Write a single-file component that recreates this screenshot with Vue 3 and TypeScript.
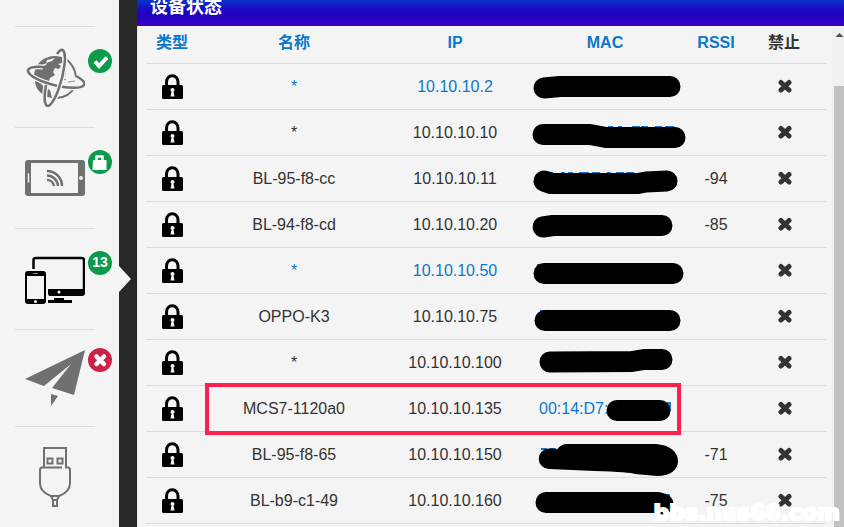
<script setup lang="ts">
interface Device {
  name: string
  ip: string
  rssi: string
  own?: boolean
  mac?: string
  marked?: boolean
  mask: string
  filled?: boolean
  traces?: string
}

const devices: Device[] = [
  { name: '*', ip: '10.10.10.2', rssi: '', own: true, mask: 'M24 24L40 22.5H150' },
  { name: '*', ip: '10.10.10.10', rssi: '', mask: 'M23 24.5H70L86 27.5H155', traces: 'M88 17h5m5 0h4m10 0h8m1 0h7m7 0h7m3 0h9' },
  { name: 'BL-95-f8-cc', ip: '10.10.10.11', rssi: '-94', mask: 'M24 25L31 27.5H118L126 26L147 25', traces: 'M27 17h6m8 0h4m3 0h5m6 0h10m3 0h8m7 0h4m5 0h8m2 0h8' },
  { name: 'BL-94-f8-cd', ip: '10.10.10.20', rssi: '-85', mask: 'M23 25L33 23.5H142' },
  { name: '*', ip: '10.10.10.50', rssi: '', own: true, mask: 'M24 25.5H153', traces: 'M17 17h4' },
  { name: 'OPPO-K3', ip: '10.10.10.75', rssi: '', mask: 'M25 26.5H150', traces: 'M20 17h4' },
  { name: '*', ip: '10.10.10.100', rssi: '', mask: 'M30 22L112 21.5L124 19.5H142' },
  { name: 'MCS7-1120a0', ip: '10.10.10.135', rssi: '', mac: '00:14:D7:', marked: true, mask: 'M97 24.5H140', traces: 'M147 17h3v8' },
  {
    name: 'BL-95-f8-65', ip: '10.10.10.150', rssi: '-71', filled: true, traces: 'M21 17h6m3 0h6',
    mask: 'M29 16.5Q34 16 37 17.500Q41 12 47 12H136C150 13 158 20 158 29C158 38 150 44 137 44L115 42Q110 40 75 39L52 38L29 37A10 10 0 0 1 29 16.500Z',
  },
  { name: 'BL-b9-c1-49', ip: '10.10.10.160', rssi: '-75', mask: 'M26 24.500H138L143 26', traces: 'M146 17h3v3' },
]
</script>

<template>
  <div class="page">
    <nav class="side" aria-label="状态">
      <div class="lead"></div>
      <a class="item" href="#internet">
        <svg class="icon" width="60" height="60" viewBox="0 0 60 60">
          <path d="M41 12Q50 19 51 30M50 40Q44 50 32 51" fill="none" stroke="#707070" stroke-width="2" />
          <path d="M9 31C9 17 18 9 31 9L37 10L37 16L33 17L36 19L34 22L30 21L28 25L30 28L25 31L24 34L10 32Z" fill="#707070" />
          <path d="M22 13l8-2-3 3-6 2zM17 18l5-2-1 2-5 2z" fill="#f4f4f4" />
          <path d="M10 34C17 35 18 41 25 43L27 51C18 50 10 42 10 34Z" fill="#707070" />
          <path d="M37 29l4-2M43 35l7-1M38 33l3-1" stroke="#909090" stroke-width="1" />
          <path d="M18 20A29 8 14 1 0 51 29" fill="none" stroke="#f4f4f4" stroke-width="5" />
          <path d="M18 20A29 8 14 1 0 51 29" fill="none" stroke="#707070" stroke-width="2.500" />
          <path d="M32 7A7 29 15 1 1 21 38" fill="none" stroke="#f4f4f4" stroke-width="5" />
          <path d="M32 7A7 29 15 1 1 21 38" fill="none" stroke="#707070" stroke-width="2.500" />
        </svg>
        <span class="badge">
          <svg width="24" height="24" viewBox="0 0 24 24"><path d="M7 12.500l4 4.500L19 8.500" fill="none" stroke="#fff" stroke-width="4" /></svg>
        </span>
      </a>
      <a class="item" href="#wireless">
        <svg class="icon" width="60" height="60" viewBox="0 0 60 60">
          <rect y="12" width="60" height="36" rx="3" fill="#707070" />
          <rect x="6" y="15" width="47" height="30" fill="#f4f4f4" />
          <path d="M3.500 26v8" stroke="#f4f4f4" stroke-width="1.500" stroke-linecap="round" />
          <circle cx="56" cy="30" r="2" fill="#f4f4f4" />
          <path d="M22 23A15 15 0 0 1 37 38M22 27.500A11 11 0 0 1 33 38M22 32A7 7 0 0 1 29 38" fill="none" stroke="#707070" stroke-width="2.500" />
        </svg>
        <span class="badge">
          <svg width="24" height="24" viewBox="0 0 24 24">
            <path d="M5 10H18.500V20H4.500Z" fill="#fff" />
            <path d="M8.500 11V6.500H14.500V11" fill="none" stroke="#fff" stroke-width="2.500" stroke-linejoin="round" />
          </svg>
        </span>
      </a>
      <a class="item current" href="#devices">
        <svg class="icon" width="60" height="60" viewBox="0 0 60 60">
          <path d="M8.500 20V11Q8.500 9 11 9H56.500Q59 9 59 11V42" fill="none" stroke="#000" stroke-width="2.500" />
          <path d="M23 40H60V44Q60 47 57 47H25Q23 47 23 44ZM29 49H39V51H47V54H23V51H29Z" fill="#000" />
          <circle cx="34" cy="43" r="1.500" fill="#fff" />
          <rect y="22" width="21" height="33" rx="3" fill="#000" />
          <path d="M2 27H19V50H2Z" fill="#f4f4f4" />
          <path d="M8 24.500h5" stroke="#888" />
          <circle cx="10.500" cy="52.500" r="1.500" fill="#fff" />
        </svg>
        <span class="badge">13</span>
      </a>
      <a class="item" href="#share">
        <svg class="icon" width="60" height="56" viewBox="0 0 60 56">
          <path d="M60 0L0 29L19 36L46 14L27 38L49 45ZM26 44L33 46L26 56Z" fill="#707070" />
        </svg>
        <span class="badge bad">
          <svg width="24" height="24" viewBox="0 0 24 24"><path d="M8.500 8.500l7.500 7.500M16 8.500l-7.500 7.500" stroke="#fff" stroke-width="4.500" stroke-linecap="round" /></svg>
        </span>
      </a>
      <a class="item" href="#usb">
        <svg class="icon" width="60" height="60" viewBox="0 0 60 60" fill="none" stroke="#707070" stroke-width="2">
          <path d="M19 20V1H41V20M37 20.500H17Q15 20.500 15 23V36Q15 45 26 49H34Q45 45 45 36V23Q45 20.500 43 20.500H40" />
          <path d="M22.500 11.500h5v5h-5zM32.500 11.500h5v5h-5zM26 49L28 53H32L34 49M28 53V59H32V53" />
        </svg>
      </a>
    </nav>

    <div class="strip"></div>

    <main class="panel">
      <header class="bar"><h1>设备状态</h1></header>
      <div class="body">
        <div class="content">
          <table>
            <colgroup>
              <col class="narrow" /><col /><col class="ip" /><col class="mac" /><col class="narrow" /><col class="ban" />
            </colgroup>
            <thead>
              <tr>
                <th>类型</th><th>名称</th><th>IP</th><th>MAC</th><th>RSSI</th><th class="plain">禁止</th>
              </tr>
            </thead>
            <tbody>
              <tr v-for="d in devices" :key="d.ip" :class="{ own: d.own, marked: d.marked }">
                <td>
                  <svg width="22" height="26" viewBox="0 0 22 26">
                    <path d="M5.500 12V8A5.500 6 0 0 1 17 8V12" fill="none" stroke="#000" stroke-width="3" />
                    <rect x="1" y="11" width="21" height="14" rx="1.500" fill="#000" />
                    <path d="M9.500 16a2 2 0 1 1 4 0q0 1-1 1.500l1 5h-4l1-5q-1-.5-1-1.500z" fill="#f4f4f4" />
                  </svg>
                </td>
                <td>{{ d.name }}</td>
                <td>{{ d.ip }}</td>
                <td class="address">
                  <a v-if="d.mac" href="#device">{{ d.mac }}</a>
                  <svg class="mask" width="170" height="46" viewBox="0 0 170 46">
                    <path v-if="d.traces" :d="d.traces" class="trace" />
                    <path :d="d.mask" :class="d.filled ? 'solid' : 'stroke'" />
                  </svg>
                </td>
                <td>{{ d.rssi }}</td>
                <td>
                  <button type="button" aria-label="禁止">
                    <svg width="16" height="16" viewBox="0 0 16 16"><path d="M5 3.500l8 7.500M13 3.500l-8 7.500" stroke="#333" stroke-width="5" stroke-linecap="round" /></svg>
                  </button>
                </td>
              </tr>
            </tbody>
          </table>
        </div>
        <div class="scroll">
          <svg width="10" height="60" viewBox="0 0 10 60"><path d="M1.500 11L5.500 7L9.500 11Z" fill="#505050" /></svg>
          <div class="thumb"></div>
        </div>
      </div>
      <div class="watermark">bbs.nas66.com</div>
    </main>
  </div>
</template>

<style>
body {
  margin: 0;
}
</style>

<style scoped>
.page {
  display: flex;
  height: 100vh;
  overflow: hidden;
  background: #f4f4f4;
  color: #333;
  font: 16px/24px "Liberation Sans", "Noto Sans CJK SC", sans-serif;
}
.side {
  flex: none;
  width: 119px;
}
.lead {
  height: 26px;
  margin: 0 24px 0 15px;
  border-bottom: 1px solid #dcdcdc;
}
.item {
  display: block;
  position: relative;
  margin: 0 24px 0 15px;
  padding: 20px 10px;
  border-bottom: 1px solid #dcdcdc;
  text-decoration: none;
}
.item:last-child {
  border-bottom: 0;
}
.icon {
  display: block;
}
.badge {
  position: absolute;
  right: -17px;
  bottom: 54px;
  width: 24px;
  height: 24px;
  border-radius: 12px;
  background: #0b9b4b;
  color: #fff;
  font-size: 14px;
  font-weight: bold;
  line-height: 22px;
  text-align: center;
}
.badge svg {
  display: block;
}
.bad {
  background: #cb2347;
}
.current::after {
  content: "";
  position: absolute;
  right: -36px;
  top: 37px;
  border: solid transparent;
  border-width: 13px 0 13px 12px;
  border-left-color: #f4f4f4;
}
.strip {
  flex: none;
  width: 18px;
  background: #282828;
}
.panel {
  position: relative;
  flex: 1;
  min-width: 0;
  display: flex;
  flex-direction: column;
}
.bar {
  display: flex;
  align-items: flex-end;
  height: 26px;
  flex: none;
  background: linear-gradient(#0835cc, #1c08c4 38%, #2200bf 60%, #3a00c4);
}
h1 {
  margin: 0 0 6px 13px;
  color: #fff;
  font-size: 18px;
  line-height: 26px;
}
.body {
  flex: 1;
  min-height: 0;
  display: flex;
  border-left: 1px solid #e6e6e6;
}
.content {
  flex: 1;
  padding: 0 6px 0 8px;
}
table {
  width: 100%;
  table-layout: fixed;
  border-spacing: 0;
  text-align: center;
}
.narrow {
  width: 52px;
}
.ip {
  width: 130px;
}
.mac {
  width: 170px;
}
.ban {
  width: 84px;
}
th {
  height: 24px;
  padding: 5px 0 8px;
  border-bottom: 1px solid #dcdcdc;
  color: #0b78cc;
}
.plain {
  color: #333;
}
td {
  height: 45px;
  padding: 0;
  border-bottom: 1px solid #dcdcdc;
}
td svg {
  display: block;
  margin: 0 auto;
}
.own,
.address a {
  color: #0b78cc;
}
.address {
  position: relative;
}
.address a {
  display: block;
  margin-left: 19px;
  text-align: left;
  text-decoration: none;
}
.mask {
  position: absolute;
  left: 0;
  top: 0;
}
.solid {
  fill: #000;
}
.stroke {
  fill: none;
  stroke: #000;
  stroke-width: 21;
  stroke-linecap: round;
  stroke-linejoin: round;
}
.trace {
  fill: none;
  stroke: #0b78cc;
  stroke-width: 2;
}
.marked {
  position: relative;
}
.marked td:first-child::after {
  content: "";
  position: absolute;
  z-index: 1;
  left: 59px;
  right: 145px;
  top: -3px;
  bottom: -3px;
  border: 4px solid #ff1f4c;
}
button {
  display: block;
  margin: 0 auto;
  padding: 0;
  border: 0;
  background: none;
}
.scroll {
  flex: none;
  width: 12px;
  display: flex;
  flex-direction: column;
  align-items: flex-end;
  background: #f0f0f0;
}
.thumb {
  flex: 1;
  width: 10px;
  background: #c1c1c1;
}
.watermark {
  position: absolute;
  right: 4px;
  bottom: 0;
  color: #fff;
  font: bold 22px/28px "DejaVu Sans", sans-serif;
  -webkit-text-stroke: 2px #fff;
}
</style>
